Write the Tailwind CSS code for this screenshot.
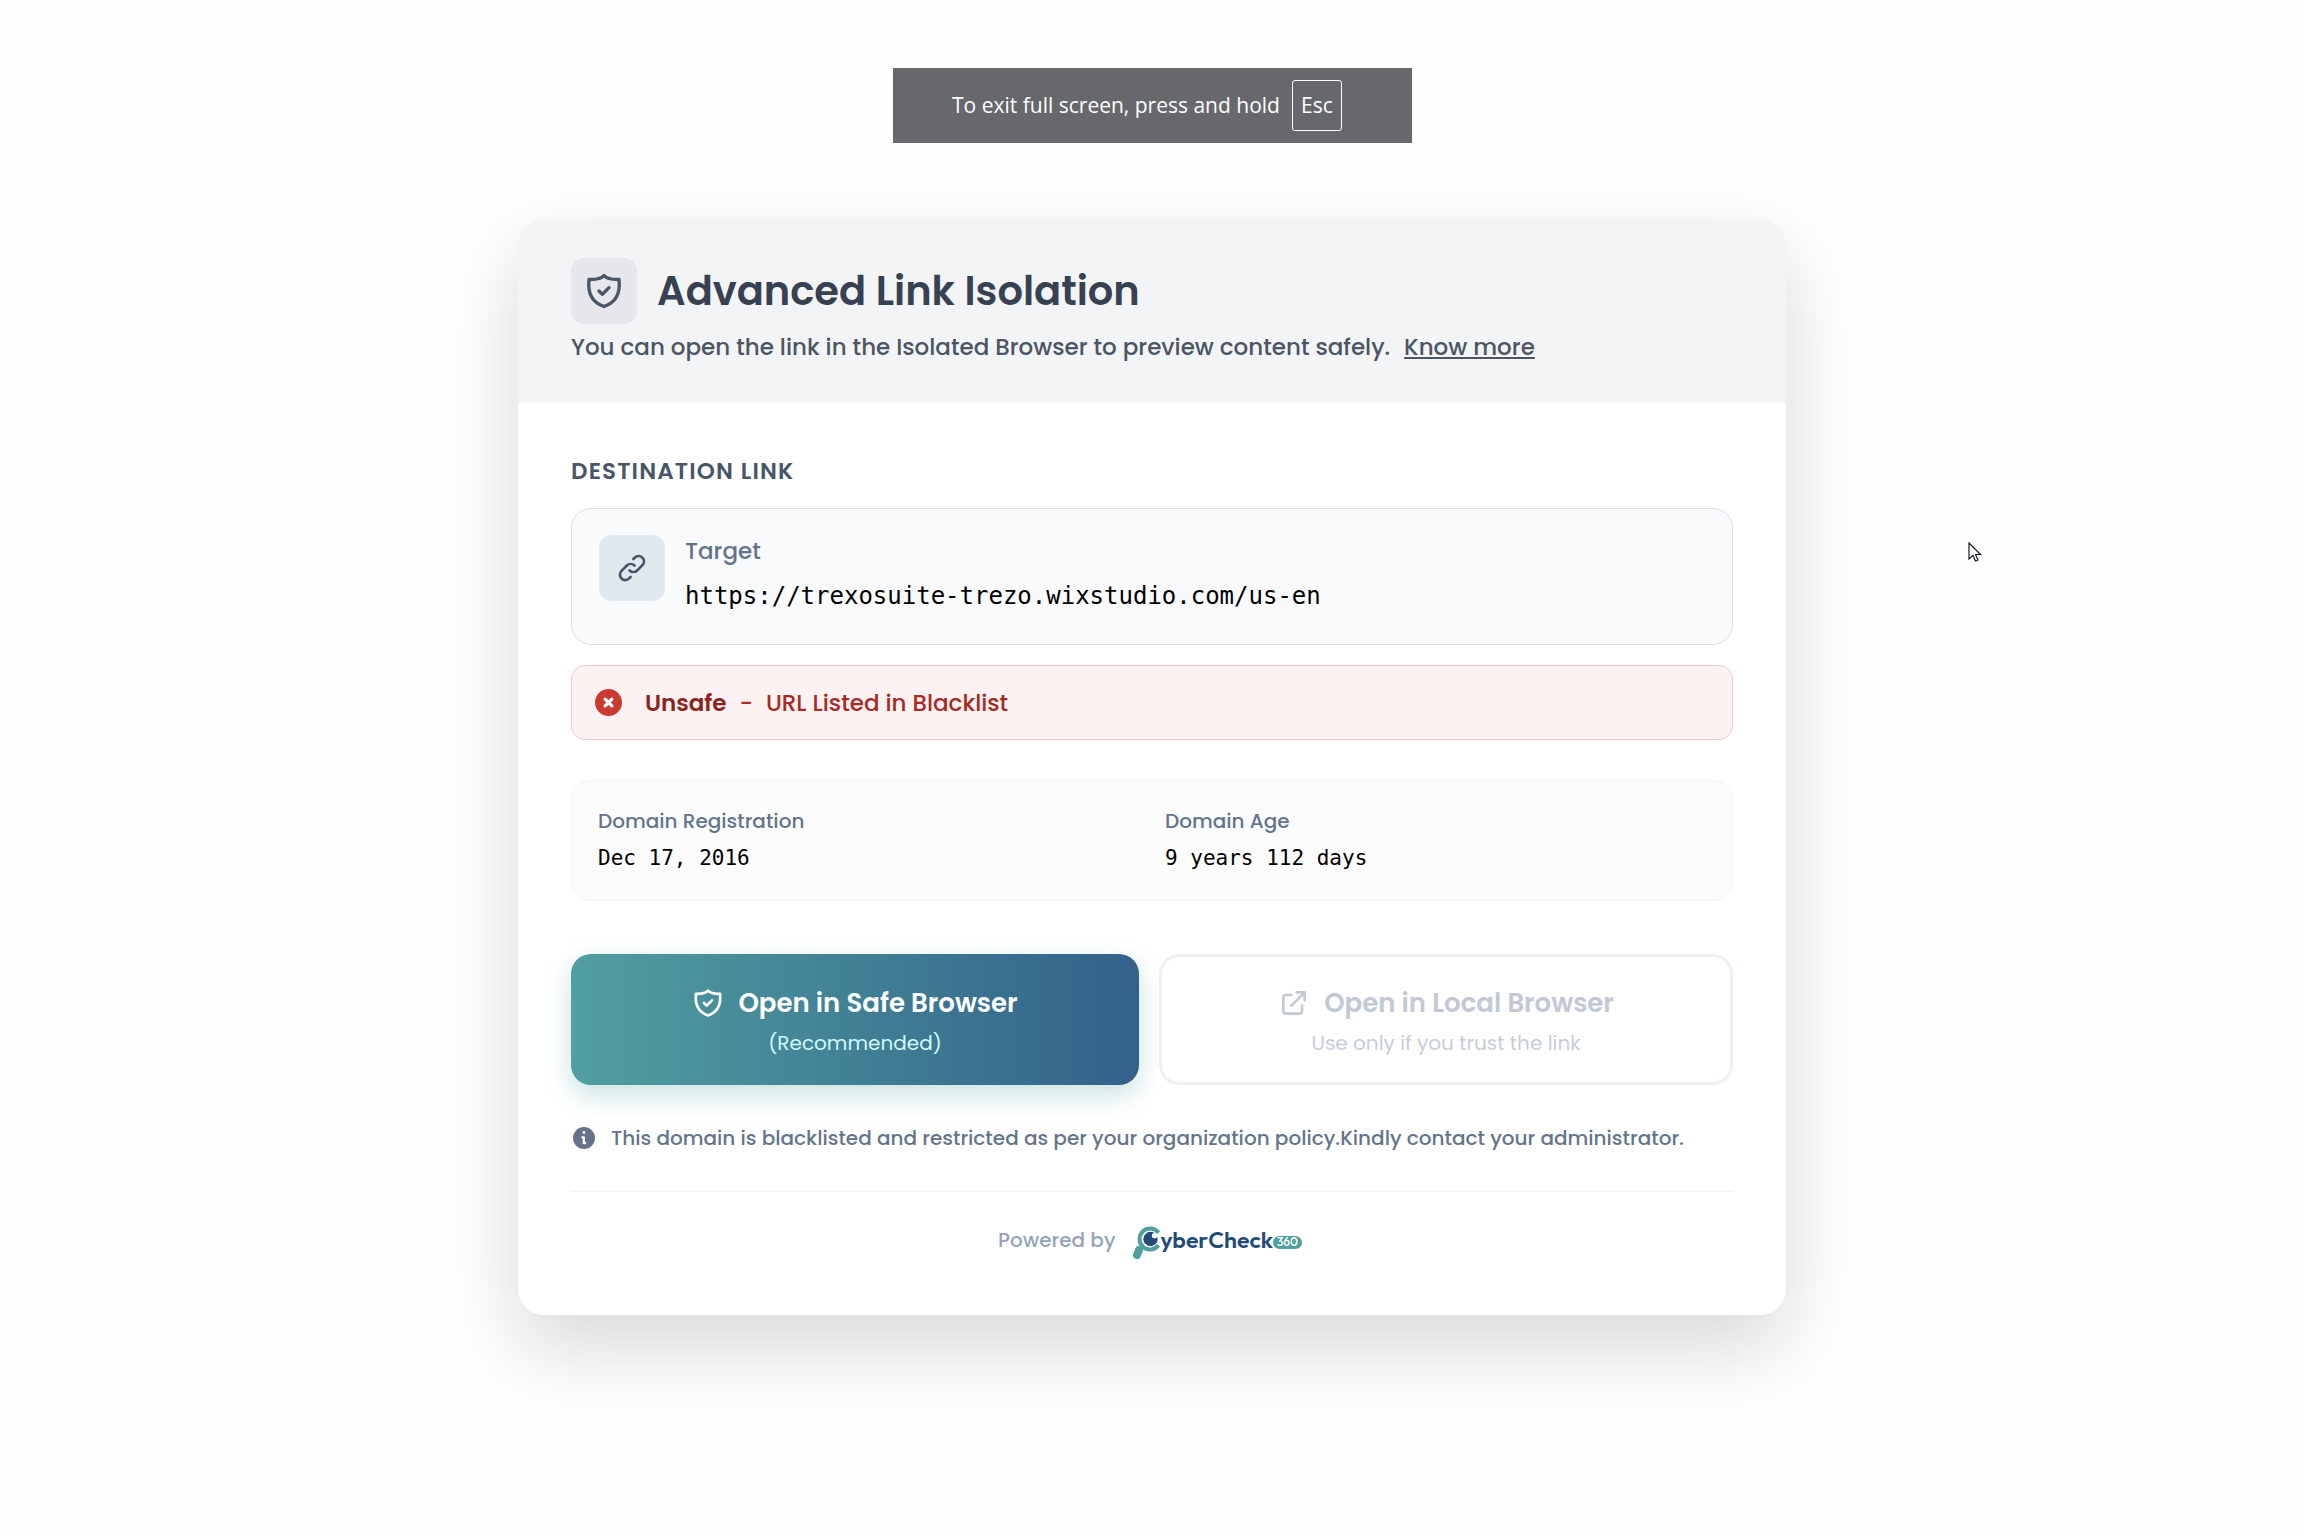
<!DOCTYPE html>
<html lang="en">
<head>
    <meta charset="UTF-8">
    <meta name="viewport" content="width=device-width, initial-scale=1.0">
    <title>Advanced Link Isolation</title>
    <script src="https://cdn.jsdelivr.net/npm/@tailwindcss/browser@4"></script>
</head>
<body class="relative min-h-screen bg-[#fefefe] font-['Poppins','Inter',sans-serif] pt-[68px] pb-16">

    <!-- Full screen notice -->
    <div class="mx-auto flex h-[75px] w-[519px] items-center justify-center gap-3 bg-[#67686c] pr-[10px] font-['Segoe_UI','Open_Sans',sans-serif] text-[21px] text-white">
        <span>To exit full screen, press and hold</span>
        <kbd class="flex h-[51px] w-[50px] items-center justify-center rounded-[3px] border border-white font-['Segoe_UI','Open_Sans',sans-serif]">Esc</kbd>
    </div>

    <main class="mx-auto mt-[76px] w-full max-w-[1268px] overflow-hidden rounded-[26px] bg-white shadow-[0_33px_80px_rgba(0,0,0,0.15)]">

        <header class="bg-[#f3f4f6] px-[53px] pt-[39px] pb-[38px]">
            <div class="flex items-center gap-5">
                <div class="flex size-[66px] items-center justify-center rounded-[13px] bg-[#e5e7eb] text-[#4b5563]">
                    <svg class="size-10" viewBox="0 0 24 24" fill="none" stroke="currentColor" stroke-width="2" stroke-linecap="round" stroke-linejoin="round">
                        <path d="M12 2.700c-1.300 1.600-5 2.500-9 2.400-.8 7 1 13.500 9 16.200 8-2.700 9.800-9.200 9-16.200-4 .1-7.700-.8-9-2.400z"/>
                        <path d="M9 12l2 2 4-4"/>
                    </svg>
                </div>
                <h1 class="text-[40px] leading-[66px] font-semibold text-[#374151]">Advanced Link Isolation</h1>
            </div>
            <p class="mt-[5px] text-[23px] leading-9 font-medium text-[#4b5563]">
                You can open the link in the Isolated Browser to preview content safely.
                <a href="#" class="ml-2 underline decoration-2 underline-offset-2">Know more</a>
            </p>
        </header>

        <div class="px-[53px] pt-[51px] pb-[55px]">
            <h2 class="text-[23px] leading-[34px] font-semibold tracking-wider text-[#475569]">DESTINATION LINK</h2>

            <section class="mt-5 flex h-[137px] gap-5 rounded-[20px] border border-[#dbe1ea] bg-[#f8fafc] px-[27px] pt-[26px]">
                <div class="flex size-[66px] shrink-0 items-center justify-center rounded-[13px] bg-[#e2e8f0] text-[#475569]">
                    <svg class="size-8" viewBox="0 0 24 24" fill="none" stroke="currentColor" stroke-width="2" stroke-linecap="round" stroke-linejoin="round">
                        <path d="M13.828 10.172a4 4 0 00-5.656 0l-4 4a4 4 0 105.656 5.656l1.102-1.101m-.758-4.899a4 4 0 005.656 0l4-4a4 4 0 00-5.656-5.656l-1.100 1.100"/>
                    </svg>
                </div>
                <div>
                    <p class="text-[23px] leading-8 font-medium text-[#64748b]">Target</p>
                    <p class="mt-[13px] font-['DejaVu_Sans_Mono',monospace] text-2xl leading-8 text-black">https://trexosuite-trezo.wixstudio.com/us-en</p>
                </div>
            </section>

            <section class="mt-5 flex h-[75px] items-center rounded-[14px] border border-[#f8c8c8] bg-[#fdf2f2] pl-[23px] text-[23px] leading-8 font-medium">
                <svg class="size-[27px]" viewBox="0 0 20 20">
                    <circle cx="10" cy="10" r="10" fill="#cb3a31"/>
                    <path d="M7.500 7.500l5 5m0-5l-5 5" stroke="#fff" stroke-width="2.400" stroke-linecap="round"/>
                </svg>
                <span class="ml-[23px] font-semibold text-[#8b2420]">Unsafe</span>
                <span class="mx-[13px] text-[#b02a25]">-</span>
                <span class="text-[#a82a25]">URL Listed in Blacklist</span>
            </section>

            <dl class="mt-10 grid h-[121px] grid-cols-2 rounded-[20px] border border-[#f3f4f8] bg-[#fcfcfc] px-[26px] pt-6">
                <div>
                    <dt class="text-xl leading-8 font-medium text-[#64748b]">Domain Registration</dt>
                    <dd class="mt-[5px] font-['DejaVu_Sans_Mono',monospace] text-[21px] leading-8 text-black">Dec 17, 2016</dd>
                </div>
                <div class="pl-[13px]">
                    <dt class="text-xl leading-8 font-medium text-[#64748b]">Domain Age</dt>
                    <dd class="mt-[5px] font-['DejaVu_Sans_Mono',monospace] text-[21px] leading-8 text-black">9 years 112 days</dd>
                </div>
            </dl>

            <div class="mt-[53px] flex h-[131px] gap-5">
                <button type="button" class="flex flex-1 flex-col items-center justify-center gap-[6px] rounded-[20px] bg-linear-to-r from-[#519f9f] to-[#33618a] pt-1 shadow-[0_10px_26px_rgba(81,159,159,0.3)]">
                    <span class="flex items-center gap-[14px] text-[26px] leading-9 font-semibold text-white">
                        <svg class="size-8" viewBox="0 0 24 24" fill="none" stroke="currentColor" stroke-width="2" stroke-linecap="round" stroke-linejoin="round">
                            <path d="M12 2.700c-1.300 1.600-5 2.500-9 2.400-.8 7 1 13.500 9 16.200 8-2.700 9.800-9.200 9-16.200-4 .1-7.700-.8-9-2.400z"/>
                            <path d="M9 12l2 2 4-4"/>
                        </svg>
                        Open in Safe Browser
                    </span>
                    <span class="text-xl leading-8 text-[#cffafe]">(Recommended)</span>
                </button>
                <button type="button" disabled class="flex flex-1 flex-col items-center justify-center gap-[6px] rounded-[20px] border-3 border-[#edf1f6] bg-white pt-1">
                    <span class="flex items-center gap-[14px] text-[26px] leading-9 font-semibold text-[#c2c8d4]">
                        <svg class="size-8" viewBox="0 0 24 24" fill="none" stroke="currentColor" stroke-width="2" stroke-linecap="round" stroke-linejoin="round">
                            <path d="M10 6H6a2 2 0 00-2 2v10a2 2 0 002 2h10a2 2 0 002-2v-4M14 4h6m0 0v6m0-6L10 14"/>
                        </svg>
                        Open in Local Browser
                    </span>
                    <span class="text-xl leading-8 text-[#c5cdd8]">Use only if you trust the link</span>
                </button>
            </div>

            <div class="mt-9 flex items-center gap-4 pl-0.5 text-xl leading-[34px] font-medium text-[#64748b]">
                <svg class="size-[22px] shrink-0" viewBox="0 0 20 20">
                    <path fill="#66728b" fill-rule="evenodd" d="M20 10a10 10 0 11-20 0 10 10 0 0120 0zM11.200 5a1.300 1.300 0 11-2.600 0 1.300 1.300 0 012.600 0zM8.400 8.300a1 1 0 000 2h.3v4a1.300 1.300 0 001.300 1.300h1.200a1 1 0 000-2h-.3v-4a1.300 1.300 0 00-1.300-1.300z"/>
                </svg>
                <p>This domain is blacklisted and restricted as per your organization policy.Kindly contact your administrator.</p>
            </div>

            <footer class="mt-9 flex items-center justify-center gap-4 border-t border-[#f3f4f6] pt-7 pr-1">
                <span class="text-xl leading-9 font-medium text-[#94a3b8]">Powered by</span>
                <a href="#" aria-label="CyberCheck360" class="flex items-center">
                    <svg class="mt-[6px] h-[34px] w-[29px]" viewBox="0 0 29 34">
                        <path d="M7 24L5 29" stroke="#519f9f" stroke-width="8" stroke-linecap="round"/>
                        <path d="M26.500 6.800A10.500 10.500 0 1 0 26.500 19.200" fill="none" stroke="#519f9f" stroke-width="4"/>
                        <circle cx="18.500" cy="13" r="7.200" fill="#224b78"/>
                        <circle cx="22.500" cy="9.700" r="2.600" fill="#fff"/>
                    </svg>
                    <span class="font-['Outfit','Lato',sans-serif] text-[23px] leading-8 font-semibold text-[#224b78]">yberCheck</span>
                    <span class="mt-1 flex h-[13px] w-[29px] items-center justify-center rounded-full bg-[#519f9f] font-['Outfit','Lato',sans-serif] text-xs font-medium text-white">360</span>
                </a>
            </footer>
        </div>
    </main>

    <!-- Mouse pointer -->
    <svg class="absolute top-[542px] left-[1968px] h-5 w-[14px]" viewBox="0 0 14 20">
        <path d="M1 1v16l4-3.500 2.500 5.500 2.500-1-2.500-5.500h5z" fill="#fff" stroke="#1a1a2a" stroke-width="1.200"/>
    </svg>
</body>
</html>
